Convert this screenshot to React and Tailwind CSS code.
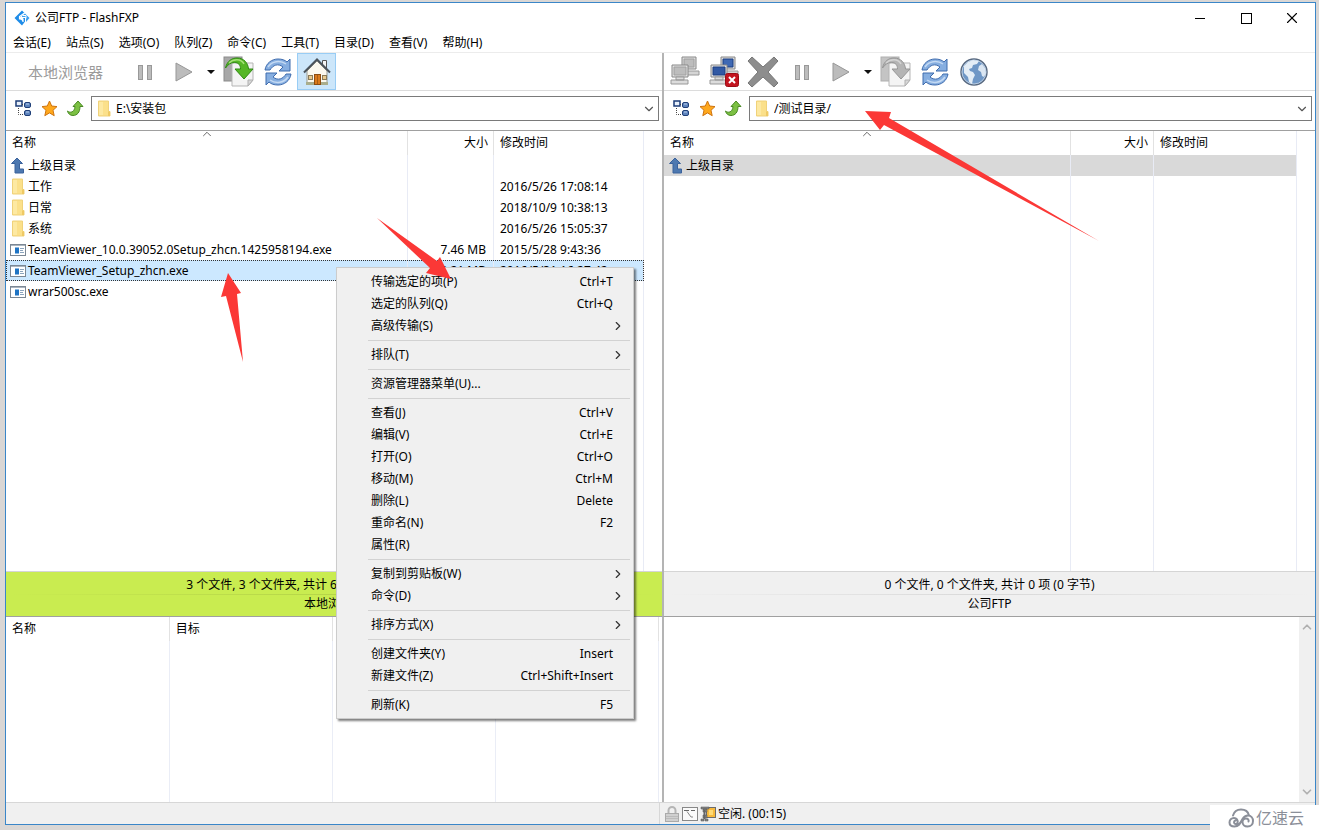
import React, { useState } from 'react';
import { ChevronDown, ChevronRight, ChevronUp, X } from 'lucide-react';

const menus = ['会话(E)', '站点(S)', '选项(O)', '队列(Z)', '命令(C)', '工具(T)', '目录(D)', '查看(V)', '帮助(H)'];

const localFiles = [
    { name: '上级目录', type: 'up' },
    { name: '工作', type: 'folder', time: '2016/5/26 17:08:14' },
    { name: '日常', type: 'folder', time: '2018/10/9 10:38:13' },
    { name: '系统', type: 'folder', time: '2016/5/26 15:05:37' },
    { name: 'TeamViewer_10.0.39052.0Setup_zhcn.1425958194.exe', type: 'exe', size: '7.46 MB', time: '2015/5/28 9:43:36' },
    { name: 'TeamViewer_Setup_zhcn.exe', type: 'exe', size: '9.21 MB', time: '2016/5/31 16:27:42' },
    { name: 'wrar500sc.exe', type: 'exe' },
];

const remoteFiles = [{ name: '上级目录', type: 'up' }];

const contextMenu = [
    [
        { label: '传输选定的项(P)', keys: 'Ctrl+T' },
        { label: '选定的队列(Q)', keys: 'Ctrl+Q' },
        { label: '高级传输(S)', sub: true },
    ],
    [{ label: '排队(T)', sub: true }],
    [{ label: '资源管理器菜单(U)...' }],
    [
        { label: '查看(J)', keys: 'Ctrl+V' },
        { label: '编辑(V)', keys: 'Ctrl+E' },
        { label: '打开(O)', keys: 'Ctrl+O' },
        { label: '移动(M)', keys: 'Ctrl+M' },
        { label: '删除(L)', keys: 'Delete' },
        { label: '重命名(N)', keys: 'F2' },
        { label: '属性(R)' },
    ],
    [
        { label: '复制到剪贴板(W)', sub: true },
        { label: '命令(D)', sub: true },
    ],
    [{ label: '排序方式(X)', sub: true }],
    [
        { label: '创建文件夹(Y)', keys: 'Insert' },
        { label: '新建文件(Z)', keys: 'Ctrl+Shift+Insert' },
    ],
    [{ label: '刷新(K)', keys: 'F5' }],
];

const LogoIcon = () => (
    <svg width="16" height="16" viewBox="0 0 16 16">
        <path d="M8 .5l2.500 2.500L5 8l4 3.500V8h2v3.500L8 15.500.5 8z" fill="#1f8ce8" />
        <path d="M11 3.500L15.500 8 12 12V7H8V5.500z" fill="#3ba0f2" />
        <path d="M10.500 3L5.500 6.500v2.500h3.500v3" fill="none" stroke="#fff" strokeWidth="1.200" />
        <path d="M8.500 5.500h3.500v3" fill="none" stroke="#fff" strokeWidth="1" />
    </svg>
);

const FolderIcon = () => (
    <svg width="14" height="17" viewBox="0 0 14 17" className="shrink-0">
        <path d="M1.500 1h10v10.500h1.500V16H1.500z" fill="#fbe08a" stroke="#f0d27a" strokeWidth="1" />
        <path d="M2 2h4v13H2z" fill="#fde9a2" />
        <path d="M11 11.500h2v4.500h-2z" fill="#efc964" />
    </svg>
);

const UpIcon = () => (
    <svg width="14" height="17" viewBox="0 0 14 17" className="shrink-0">
        <path d="M6 1l5.500 5.500H8.500V12h4v4H4V6.500H.5z" fill="#4d78b0" stroke="#3a629c" strokeWidth="1" />
    </svg>
);

const ExeIcon = () => (
    <svg width="16" height="12" viewBox="0 0 16 12" className="shrink-0">
        <rect x=".5" y=".5" width="15" height="11" fill="#fff" stroke="#7b8794" />
        <path d="M1 1.500h14" stroke="#aab4be" />
        <rect x="5" y="3.500" width="4" height="6" fill="#1f74c4" />
        <path d="M10 4.500h4M10 6.500h3M10 8.500h4" stroke="#8ba4bd" />
    </svg>
);

const PauseIcon = () => (
    <svg width="18" height="18" viewBox="0 0 18 18">
        <rect x="2.500" y="2.500" width="4" height="14" fill="#bcbcbc" stroke="#999" />
        <rect x="11.500" y="2.500" width="4" height="14" fill="#bcbcbc" stroke="#999" />
    </svg>
);

const PlayIcon = () => (
    <svg width="18" height="20" viewBox="0 0 18 20">
        <path d="M1 1l16 9-16 9z" fill="#bcbcbc" stroke="#979797" />
    </svg>
);

const CaretIcon = () => (
    <svg width="8" height="4" viewBox="0 0 8 4">
        <path d="M0 0h8L4 4z" fill="#111" />
    </svg>
);

const TransferIcon = ({ disabled }) => (
    <svg width="32" height="32" viewBox="0 0 32 32">
        <rect x="1" y="1" width="18" height="24" fill={disabled ? '#c4c4c4' : '#a8a8a8'} stroke={disabled ? '#b0b0b0' : '#8b8b8b'} />
        <path d="M9 7h21v17l-5 6H9z" fill="#f4f4f4" stroke="#b5b5b5" />
        <path d="M25 30v-6h5z" fill="#d8d8d8" stroke="#b0b0b0" />
        <path
            d="M2.500 12C4 5 9 2 14 2c7 0 11 5 11.500 11H30l-9 10-9-10h5.500c0-4-2-6.500-6-6.500-4 0-6.500 2-9 5.500z"
            fill={disabled ? '#b4b4b4' : '#55b626'}
            stroke={disabled ? '#969696' : '#2f8a12'}
        />
        <path d="M6 7c4-4 12-5 15 1" fill="none" stroke={disabled ? '#d4d4d4' : '#a5e178'} strokeWidth="1.500" />
    </svg>
);

const RefreshIcon = () => (
    <svg width="28" height="28" viewBox="0 0 28 28">
        <g fill="#86aee0" stroke="#3f6cae" strokeLinejoin="round">
            <path d="M1 12C2 5 8 1 14 1c4 0 7 1 9 3l3-3v12H15l4-4c-5-4-10-2-13 3z" />
            <path d="M27 16c-1 7-7 11-13 11-4 0-7-1-9-3l-3 3V15h11l-4 4c5 4 10 2 13-3z" />
        </g>
        <path d="M4 9c4-6 12-7 18-3M24 19c-4 6-12 7-18 3" fill="none" stroke="#c5daf3" strokeWidth="1.500" />
    </svg>
);

const HomeIcon = () => (
    <svg width="30" height="30" viewBox="0 0 30 30">
        <path d="M20.500 3.500h4v8h-4z" fill="#f5f5f5" stroke="#555" />
        <path d="M5 14l10-10 10 10v13H5z" fill="#fbf8ee" stroke="#9a9a90" />
        <path d="M4 25h8v3H4zM19 25h7v3h-7z" fill="#a9ad8c" />
        <path d="M2 15.500L15 2.500l13 13" fill="none" stroke="#4b535b" strokeWidth="2" />
        <rect x="12.500" y="17.500" width="6" height="10" fill="#d9791b" stroke="#8d4c10" />
        <path d="M15.500 18v9" stroke="#a85c14" />
        <rect x="6.500" y="18.500" width="4" height="4" fill="#e8c98c" stroke="#8a7a58" />
        <rect x="20.500" y="18.500" width="4" height="4" fill="#e8c98c" stroke="#8a7a58" />
    </svg>
);

const ComputersIcon = ({ disabled }) => (
    <svg width="32" height="32" viewBox="0 0 32 32">
        <path d="M13 1h14v12H13z" fill="#ddd" stroke="#888" />
        <path d="M15 3h10v8H15z" fill={disabled ? '#bdbdbd' : '#3f69b4'} stroke={disabled ? '#a0a0a0' : '#1c3f80'} />
        <path d="M14 15h16v4H14z" fill="#d5d5d5" stroke="#999" />
        <path d="M3 9h16v12H3z" fill="#e2e2e2" stroke="#888" />
        <path d="M5 11h12v8H5z" fill={disabled ? '#bdbdbd' : '#3159a4'} stroke={disabled ? '#a0a0a0' : '#1c3f80'} />
        <path d="M2 24h17v4H2zM7 21h8v3H7z" fill="#dcdcdc" stroke="#999" />
        {!disabled && (
            <>
                <rect x="17.500" y="17.500" width="13" height="13" rx="2" fill="#c3141f" stroke="#9d0c16" />
                <path d="M21 21l6 6M27 21l-6 6" stroke="#fff" strokeWidth="2" />
            </>
        )}
    </svg>
);

const AbortIcon = () => (
    <svg width="32" height="32" viewBox="0 0 32 32">
        <path
            d="M1 5l4-4 11 10L27 1l4 4-10 11 10 11-4 4-11-10L5 31l-4-4 10-11z"
            fill="#8d8d8d"
            stroke="#777"
        />
    </svg>
);

const GlobeIcon = () => (
    <svg width="30" height="30" viewBox="0 0 30 30">
        <circle cx="15" cy="15" r="13" fill="#6f97c6" stroke="#5a6a80" strokeWidth="1.500" />
        <circle cx="15" cy="15" r="12" fill="none" stroke="#b9cbe0" />
        <path d="M5 9l4-4 5-2 6 1-2 3-4 1-1 3-3 1 1 2 3 1 2 3-2 4-1 5-3-2-1-5-4-4z" fill="#e4edf6" />
        <path d="M20 9l3-2 3 4 1 5-2 4-2-1-1-4-3-2z" fill="#dbe6f2" />
    </svg>
);

const TreeIcon = () => (
    <svg width="17" height="17" viewBox="0 0 17 17">
        <rect x="1" y="1" width="6" height="5" fill="#e8f0fa" stroke="#1c3d78" strokeWidth="1.500" />
        <path d="M3.500 8v6.500H8M7 4.500h2" fill="none" stroke="#444" strokeDasharray="1 1" />
        <rect x="9.500" y="2.500" width="6" height="5" rx="1.500" fill="#5d83bd" stroke="#1f3f78" />
        <rect x="9.500" y="10.500" width="6" height="5" rx="1.500" fill="#5d83bd" stroke="#1f3f78" />
        <path d="M11 4h3M11 12h3" stroke="#b8cdea" />
    </svg>
);

const StarIcon = () => (
    <svg width="17" height="17" viewBox="0 0 17 17">
        <path
            d="M8.500 1l2.200 5 5.300.6-4 3.700 1.200 5.400-4.700-2.800-4.700 2.800L5 10.300 1 6.600 6.300 6z"
            fill="#ffa81c"
            stroke="#cf7410"
            strokeLinejoin="round"
        />
    </svg>
);

const GoUpIcon = () => (
    <svg width="17" height="17" viewBox="0 0 17 17">
        <path d="M11 1l5 5.500h-3c0 6-3 9-7 9-3 0-5-2-5.500-4.500 2 2 7 2 7.500-4.500H6z" fill="#7cc043" stroke="#4a8a24" strokeLinejoin="round" />
    </svg>
);

const LockIcon = () => (
    <svg width="16" height="16" viewBox="0 0 16 16">
        <path d="M4.500 8V4.500a3.500 3.500 0 017 0V8" fill="none" stroke="#b5b5b5" strokeWidth="2" />
        <rect x="1.500" y="7.500" width="13" height="8" fill="#d0d0d0" stroke="#aaa" />
        <path d="M2 10.500h12M2 12.500h12" stroke="#bbb" />
    </svg>
);

const LogIcon = () => (
    <svg width="16" height="14" viewBox="0 0 16 14">
        <rect x=".5" y=".5" width="15" height="13" fill="#fafafa" stroke="#888" />
        <path d="M2 3.500h5M9 3.500h4" stroke="#666" />
        <path d="M5 4.500l4 5.500h2" fill="none" stroke="#888" />
    </svg>
);

const CompressIcon = () => (
    <svg width="16" height="16" viewBox="0 0 16 16">
        <rect x="6.500" y="1.500" width="9" height="10" fill="#f7b93c" stroke="#6c6c6c" />
        <path d="M1 1h8v2H1zM3 3h4v3H3zM3 9h4v3H3zM1 13h3v2H1zM5 13h3v2H5z" fill="#888" stroke="#4c4c4c" strokeWidth=".5" />
        <path d="M4.500 4v9" stroke="#666" strokeWidth="2" />
        <rect x="9" y="4" width="4" height="5" fill="#ffdb77" />
    </svg>
);

const CloudLogo = () => (
    <svg width="26" height="20" viewBox="0 0 26 20" fill="none" stroke="#8b8f99" strokeWidth="2" strokeLinecap="round">
        <path d="M5 7.500C6 4 9 1.500 13 1.500c4 0 7 2 7.800 5.500" />
        <path d="M7.500 12.500a1.800 1.800 0 102 2.500c.8-3-1-5-3.500-5-2.500 0-4.500 2-4.500 4.500S3.500 18.500 6.500 18.500c5 0 6-4 8-7.500 1.200-2 3-3.500 5.500-3.500 3 0 5 2.500 5 5.500s-2 5.500-5.500 5.500c-3 0-5-2-5-4.500 0-2 1.500-3.500 3.500-3.500s3 1.500 2.500 3" />
    </svg>
);

const fileIcons = { up: <UpIcon />, folder: <FolderIcon />, exe: <ExeIcon /> };

const ToolButton = ({ label, active, children }) => (
    <button
        type="button"
        aria-label={label}
        className={`flex h-full w-[39px] shrink-0 items-center justify-center ${
            active ? 'border border-[#99cdf5] bg-[#cce6fa]' : ''
        }`}
    >
        {children}
    </button>
);

const DropButton = () => (
    <button type="button" aria-label="传输选项" className="flex h-full w-4 shrink-0 items-center justify-center">
        <CaretIcon />
    </button>
);

const AddressBar = ({ path }) => (
    <div className="flex h-10 items-center gap-[7px] border-b border-[#a0a0a0] pr-[3px] pb-1 pl-[9px]">
        <div className="flex gap-[9px]">
            <button type="button" aria-label="目录树"><TreeIcon /></button>
            <button type="button" aria-label="收藏夹"><StarIcon /></button>
            <button type="button" aria-label="向上"><GoUpIcon /></button>
        </div>
        <div className="relative flex h-[25px] flex-1 items-center border border-[#7a7a7a] bg-white">
            <span className="pointer-events-none absolute left-[5px]"><FolderIcon /></span>
            <select aria-label="路径" className="h-full w-full appearance-none bg-transparent pl-6 outline-none">
                <option>{path}</option>
            </select>
            <ChevronDown size={14} strokeWidth={2} className="pointer-events-none absolute right-0.5 text-[#555]" />
        </div>
    </div>
);

const FileList = ({ files, selected, selectedClass, onSelect, sizeClass, timeClass }) => (
    <div className="min-h-0 flex-1 overflow-hidden pr-[18px]">
        <table className="h-full w-full table-fixed border-r border-[#e8ebf5]">
            <colgroup>
                <col />
                <col className={sizeClass} />
                <col className={timeClass} />
            </colgroup>
            <thead>
                <tr className="h-6 text-left">
                    <th className="relative px-1.5 font-normal">
                        名称
                        <ChevronUp size={14} strokeWidth={1.5} className="absolute -top-1 left-1/2 -translate-x-1/2 text-[#555]" />
                    </th>
                    <th className="border-l border-[#e2e2e2] px-[5px] text-right font-normal">大小</th>
                    <th className="border-l border-[#e2e2e2] px-1.5 font-normal">修改时间</th>
                </tr>
            </thead>
            <tbody>
                {files.map((file) => (
                    <tr
                        key={file.name}
                        onClick={() => onSelect && onSelect(file.name)}
                        className={`h-[21px] ${file.name === selected ? selectedClass : ''}`}
                    >
                        <td className="pl-1">
                            <div className="flex items-center gap-0.5 whitespace-nowrap">
                                <span className="flex w-4 justify-center">{fileIcons[file.type]}</span>
                                {file.name}
                            </div>
                        </td>
                        <td className="border-l border-[#e8ebf5] pr-[7px] text-right whitespace-nowrap">{file.size}</td>
                        <td className="border-l border-[#e8ebf5] pl-1.5 whitespace-nowrap">{file.time}</td>
                    </tr>
                ))}
                <tr>
                    <td />
                    <td className="border-l border-[#e8ebf5]" />
                    <td className="border-l border-[#e8ebf5]" />
                </tr>
            </tbody>
        </table>
    </div>
);

const PaneStatus = ({ summary, title, className }) => (
    <div className={`flex h-[45px] flex-col items-center border-t border-[#d5d5d5] pt-1 text-center whitespace-nowrap ${className}`}>
        <p className="h-[18px] leading-[18px]">{summary}</p>
        <div className="h-px w-full bg-linear-to-r from-transparent via-black/10 to-transparent" />
        <p className="h-[18px] leading-[18px]">{title}</p>
    </div>
);

const ContextMenu = () => (
    <div
        role="menu"
        className="absolute top-[267px] left-[336px] w-[298px] border border-[#ccc] bg-[#f0f0f0] p-[3px] pb-[2px] shadow-[2px_2px_2px_rgba(0,0,0,0.5)]"
    >
        {contextMenu.map((group, i) => (
            <div key={group[0].label}>
                {i > 0 && <div className="my-[3px] ml-7 h-px bg-[#d2d2d2]" />}
                {group.map((item) => (
                    <button
                        key={item.label}
                        type="button"
                        role="menuitem"
                        className="flex h-[22px] w-full items-center justify-between pr-[5px] pl-[31px] text-left hover:bg-[#91c9f7]"
                    >
                        <span>{item.label}</span>
                        {item.sub ? (
                            <ChevronRight size={14} strokeWidth={2} className="text-[#333]" />
                        ) : (
                            <span className="pr-3">{item.keys}</span>
                        )}
                    </button>
                ))}
            </div>
        ))}
    </div>
);

const RedArrows = () => (
    <svg className="pointer-events-none absolute top-0 left-0" width="1110" height="370" viewBox="0 0 1110 370" fill="#fb3836">
        <path d="M865 111L891 112L889 118L1099 241L884 125L880 130Z" />
        <path d="M451 279L440 257L437 261L377 218L430 268L426 273Z" />
        <path d="M228 273L241 293L237 294L243 362L226 296L221 297Z" />
    </svg>
);

const App = () => {
    const [selected, setSelected] = useState('TeamViewer_Setup_zhcn.exe');

    return (
        <div className="relative flex h-screen flex-col overflow-hidden bg-[#dad7d5] pt-[2px] pr-[3px] pb-[5px] pl-[5px] font-['Noto_Sans','Noto_Sans_CJK_SC',sans-serif] text-[12px] leading-[18px] text-black">
            <div className="flex min-h-0 flex-1 flex-col border border-[#3a86c8] bg-white">
                <header className="flex h-[30px] items-center pl-2">
                    <LogoIcon />
                    <h1 className="flex-1 pl-[5px]">公司FTP - FlashFXP</h1>
                    <button type="button" aria-label="最小化" className="flex h-full w-[46px] items-center justify-center">
                        <span className="h-px w-2.5 bg-black" />
                    </button>
                    <button type="button" aria-label="最大化" className="flex h-full w-[46px] items-center justify-center">
                        <span className="size-[11px] border border-black" />
                    </button>
                    <button type="button" aria-label="关闭" className="flex h-full w-[46px] items-center justify-center">
                        <X size={18} strokeWidth={1.5} />
                    </button>
                </header>

                <nav className="flex h-[19px] items-center gap-[15px] pl-[7px]">
                    {menus.map((menu) => (
                        <button key={menu} type="button">{menu}</button>
                    ))}
                </nav>

                <main className="grid min-h-0 flex-1 grid-cols-[656fr_653fr] grid-rows-[minmax(0,1fr)_186px] border-t border-[#ececec]">
                    <section className="flex min-h-0 min-w-0 flex-col">
                        <div className="flex h-[38px] items-center border-b border-[#dcdcdc]">
                            <span className="w-[119px] pl-[22px] text-[15px] text-[#9b9b9b]">本地浏览器</span>
                            <ToolButton label="暂停"><PauseIcon /></ToolButton>
                            <ToolButton label="开始"><PlayIcon /></ToolButton>
                            <DropButton />
                            <ToolButton label="传输"><TransferIcon /></ToolButton>
                            <ToolButton label="刷新"><RefreshIcon /></ToolButton>
                            <ToolButton label="本地" active><HomeIcon /></ToolButton>
                        </div>
                        <AddressBar path="E:\安装包" />
                        <FileList
                            files={localFiles}
                            selected={selected}
                            selectedClass="bg-[#cce8ff] outline-1 -outline-offset-1 outline-dotted outline-[#333]"
                            onSelect={setSelected}
                            sizeClass="w-[86px]"
                            timeClass="w-[150px]"
                        />
                        <PaneStatus
                            className="bg-[#c9ec50]"
                            summary="3 个文件, 3 个文件夹, 共计 6 项 (18.51 MB, 剩余 76 GB)"
                            title="本地浏览器"
                        />
                    </section>

                    <section className="flex min-h-0 min-w-0 flex-col border-l-2 border-[#b4b4b4]">
                        <div className="flex h-[38px] items-center border-b border-[#dcdcdc] pl-px">
                            <ToolButton label="连接"><ComputersIcon disabled /></ToolButton>
                            <ToolButton label="断开"><ComputersIcon /></ToolButton>
                            <ToolButton label="中止"><AbortIcon /></ToolButton>
                            <ToolButton label="暂停"><PauseIcon /></ToolButton>
                            <ToolButton label="开始"><PlayIcon /></ToolButton>
                            <DropButton />
                            <ToolButton label="传输"><TransferIcon disabled /></ToolButton>
                            <ToolButton label="刷新"><RefreshIcon /></ToolButton>
                            <ToolButton label="站点"><GlobeIcon /></ToolButton>
                        </div>
                        <AddressBar path="/测试目录/" />
                        <FileList
                            files={remoteFiles}
                            selected="上级目录"
                            selectedClass="bg-[#d9d9d9]"
                            sizeClass="w-[83px]"
                            timeClass="w-[143px]"
                        />
                        <PaneStatus className="bg-[#f0f0f0]" summary="0 个文件, 0 个文件夹, 共计 0 项 (0 字节)" title="公司FTP" />
                    </section>

                    <section className="border-t border-[#a0a0a0] pr-[3px]">
                        <table className="h-full w-full table-fixed">
                            <thead>
                                <tr className="h-6 text-left">
                                    <th className="border-r border-[#e2e2e2] px-1.5 font-normal">名称</th>
                                    <th className="border-r border-[#e2e2e2] px-1.5 font-normal">目标</th>
                                    <th className="border-r border-[#e2e2e2]" />
                                    <th className="border-r border-[#e2e2e2]" />
                                </tr>
                            </thead>
                            <tbody>
                                <tr>
                                    <td className="border-r border-[#eaedf6]" />
                                    <td className="border-r border-[#eaedf6]" />
                                    <td className="border-r border-[#eaedf6]" />
                                    <td className="border-r border-[#eaedf6]" />
                                </tr>
                            </tbody>
                        </table>
                    </section>

                    <section className="flex border-t border-l-2 border-t-[#a0a0a0] border-l-[#b4b4b4]">
                        <div className="flex-1" />
                        <div className="flex w-4 flex-col items-center justify-between bg-[#f0f0f0] py-[3px] text-[#b0b0b0]">
                            <ChevronUp size={14} strokeWidth={3} />
                            <ChevronDown size={14} strokeWidth={3} />
                        </div>
                    </section>
                </main>

                <footer className="grid h-[22px] grid-cols-[653fr_656fr] border-t border-[#d7d7d7] bg-[#f0f0f0]">
                    <div />
                    <div className="flex items-center gap-0.5 border-l border-[#d7d7d7] pl-1">
                        <LockIcon />
                        <LogIcon />
                        <CompressIcon />
                        <span>空闲. (00:15)</span>
                    </div>
                </footer>
            </div>

            <ContextMenu />
            <RedArrows />

            <div className="absolute right-0 bottom-0 flex h-[25px] w-[109px] items-center gap-0.5 bg-white pl-[18px] text-[16px] text-[#8b8f99]">
                <CloudLogo />
                <span>亿速云</span>
            </div>
        </div>
    );
};

export default App;
